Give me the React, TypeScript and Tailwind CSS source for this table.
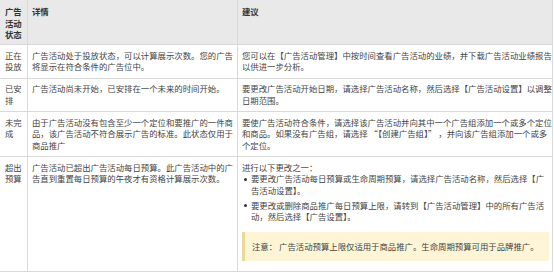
import React from 'react';

type Row = {
  status: string[];
  detail: string[];
  advice: React.ReactNode;
};

const Lines: React.FC<{ lines: string[] }> = ({ lines }) => (
  <>
    {lines.map((l, i) => (
      <div key={i} className="whitespace-nowrap">
        {l}
      </div>
    ))}
  </>
);

const Bullet: React.FC<{ lines: string[] }> = ({ lines }) => (
  <li className="flex">
    <span className="w-[9px] shrink-0 flex items-start pt-[4.5px] pl-[2px]">
      <span className="block w-[3px] h-[3px] rounded-full bg-[#333]" />
    </span>
    <div>
      <Lines lines={lines} />
    </div>
  </li>
);

const rows: Row[] = [
  {
    status: ['正在', '投放'],
    detail: ['广告活动处于投放状态，可以计算展示次数。您的广告', '将显示在符合条件的广告位中。'],
    advice: <Lines lines={['您可以在【广告活动管理】中按时间查看广告活动的业绩，并下载广告活动业绩报告', '以供进一步分析。']} />,
  },
  {
    status: ['已安', '排'],
    detail: ['广告活动尚未开始，已安排在一个未来的时间开始。'],
    advice: <Lines lines={['要更改广告活动开始日期，请选择广告活动名称，然后选择【广告活动设置】以调整', '日期范围。']} />,
  },
  {
    status: ['未完', '成'],
    detail: ['由于广告活动没有包含至少一个定位和要推广的一件商', '品，该广告活动不符合展示广告的标准。此状态仅用于', '商品推广'],
    advice: (
      <Lines
        lines={[
          '要使广告活动符合条件，请选择该广告活动并向其中一个广告组添加一个或多个定位',
          '和商品。如果没有广告组，请选择 “【创建广告组】” ，并向该广告组添加一个或多',
          '个定位。',
        ]}
      />
    ),
  },
  {
    status: ['超出', '预算'],
    detail: ['广告活动已超出广告活动每日预算。此广告活动中的广', '告直到重置每日预算的午夜才有资格计算展示次数。'],
    advice: (
      <div>
        <div className="whitespace-nowrap">进行以下更改之一：</div>
        <ul className="flex flex-col gap-[3.5px]">
          <Bullet lines={['要更改广告活动每日预算或生命周期预算，请选择广告活动名称，然后选择【广', '告活动设置】。']} />
          <Bullet lines={['要更改或删除商品推广每日预算上限，请转到【广告活动管理】中的所有广告活', '动，然后选择【广告设置】。']} />
        </ul>
        <div className="mt-[9px] mb-[5px] bg-[#fdf5d6] border-l-[3px] border-[#ead99a] pl-[7px] py-[9px] whitespace-nowrap">
          注意： 广告活动预算上限仅适用于商品推广。生命周期预算可用于品牌推广。
        </div>
      </div>
    ),
  },
];

export default function App() {
  return (
    <div className="w-[554px] h-[272px] bg-white overflow-hidden">
      <div
        className="w-[553px] text-[8.4px] leading-[11.5px] text-[#444] border-r border-b border-[#d9d9d9]"
        style={{ fontFamily: '"Noto Sans CJK SC", "Noto Sans", sans-serif' }}
      >
        {/* Header */}
        <div className="grid grid-cols-[28px_210px_315px] bg-[#e9e9e9] border-b border-[#d9d9d9] font-bold text-[#333]">
          <div className="pl-[5px] pt-[6px] pb-[3.5px] border-r border-[#d9d9d9]">
            <Lines lines={['广告', '活动', '状态']} />
          </div>
          <div className="px-[4px] pt-[6px] border-r border-[#d9d9d9]">详情</div>
          <div className="px-[4px] pt-[6px]">建议</div>
        </div>

        {/* Body */}
        {rows.map((row, i) => (
          <div
            key={i}
            className={`grid grid-cols-[28px_210px_315px] ${i < rows.length - 1 ? 'border-b border-[#d9d9d9]' : ''}`}
          >
            <div className="pl-[5px] pt-[4.5px] pb-[5px] border-r border-[#d9d9d9]">
              <Lines lines={row.status} />
            </div>
            <div className="px-[4px] pt-[4.5px] pb-[5px] border-r border-[#d9d9d9]">
              <Lines lines={row.detail} />
            </div>
            <div className="pl-[4px] pr-[4px] pt-[4.5px] pb-[5px]">{row.advice}</div>
          </div>
        ))}
      </div>
    </div>
  );
}
